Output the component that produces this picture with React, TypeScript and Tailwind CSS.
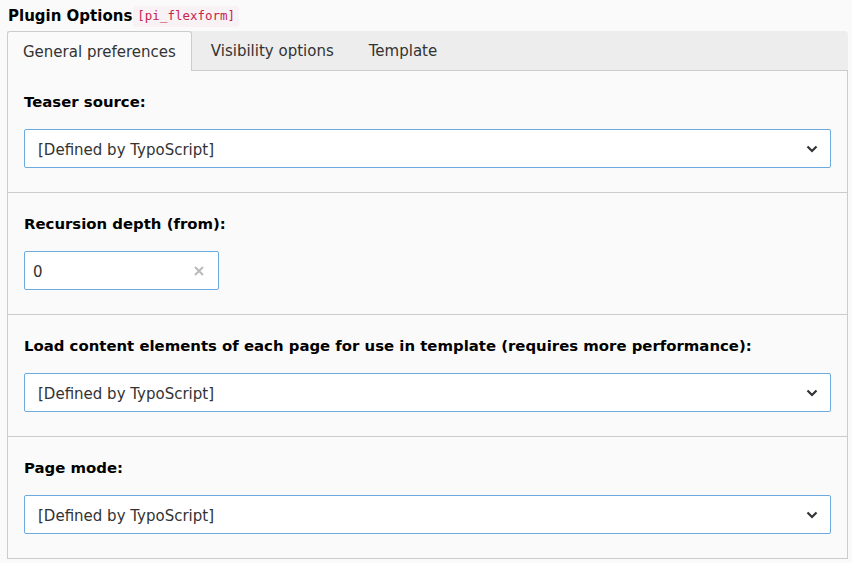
const font = { fontFamily: '"DejaVu Sans", Verdana, sans-serif' };

function Chevron() {
  return (
    <svg width="12" height="8" viewBox="0 0 12 8" className="shrink-0">
      <path d="M1.5 1.5 L6 6 L10.5 1.5" fill="none" stroke="#333" strokeWidth="2.2" />
    </svg>
  );
}

function SelectBox({ value }: { value: string }) {
  return (
    <div className="flex h-[39px] items-center justify-between rounded-[2px] border border-[#6daae0] bg-white pl-[13px] pr-[12px] text-[15px] text-[#333]">
      <span className="pt-[3px]">{value}</span>
      <Chevron />
    </div>
  );
}

function Section({ label, children, last }: { label: string; children: React.ReactNode; last?: boolean }) {
  return (
    <div className={`px-[16px] pt-[20px] pb-[24px] ${last ? "" : "border-b border-[#ccc]"}`}>
      <div className="mb-[18px] h-[20px] pt-px text-[14.9px] font-bold leading-[20px] text-black">{label}</div>
      {children}
    </div>
  );
}

export default function App() {
  const tabs = ["General preferences", "Visibility options", "Template"];
  return (
    <div className="h-[563px] w-[852px] bg-[#fafafa] pl-[7px] pr-[4px]" style={font}>
      <div className="flex h-[31px] items-center pl-px pt-[2px]">
        <span className="text-[15px] font-bold text-black">Plugin Options</span>
        <span
          className="ml-[1px] rounded-[3px] bg-[#f9f2f4] px-[4px] py-[1px] text-[12.5px] text-[#c7254e]"
          style={{ fontFamily: '"DejaVu Sans Mono", monospace' }}
        >
          [pi_flexform]
        </span>
      </div>
      <div className="flex h-[39px] rounded-tr-[4px] bg-[#ededed] text-[15px] text-[#333]">
        {tabs.map((t, i) => (
          <div
            key={t}
            className={
              i === 0
                ? "relative z-10 -mb-px flex items-center rounded-t-[3px] border border-b-0 border-[#ccc] bg-[#fafafa] px-[15px] pt-[2px]"
                : "flex items-center pl-[19px] pr-[16px] pt-[2px]"
            }
          >
            {t}
          </div>
        ))}
      </div>
      <div className="border border-[#ccc] bg-[#fafafa]">
        <Section label="Teaser source:">
          <SelectBox value="[Defined by TypoScript]" />
        </Section>
        <Section label="Recursion depth (from):">
          <div className="flex h-[39px] w-[195px] items-center justify-between rounded-[2px] border border-[#6daae0] bg-white pl-[8px] pr-[14px] text-[15px] text-[#333]">
            <span className="pt-[3px]">0</span>
            <svg width="10" height="10" viewBox="0 0 10 10">
              <path d="M1 1 L9 9 M9 1 L1 9" stroke="#bbb" strokeWidth="2" />
            </svg>
          </div>
        </Section>
        <Section label="Load content elements of each page for use in template (requires more performance):">
          <SelectBox value="[Defined by TypoScript]" />
        </Section>
        <Section label="Page mode:" last>
          <SelectBox value="[Defined by TypoScript]" />
        </Section>
      </div>
    </div>
  );
}
